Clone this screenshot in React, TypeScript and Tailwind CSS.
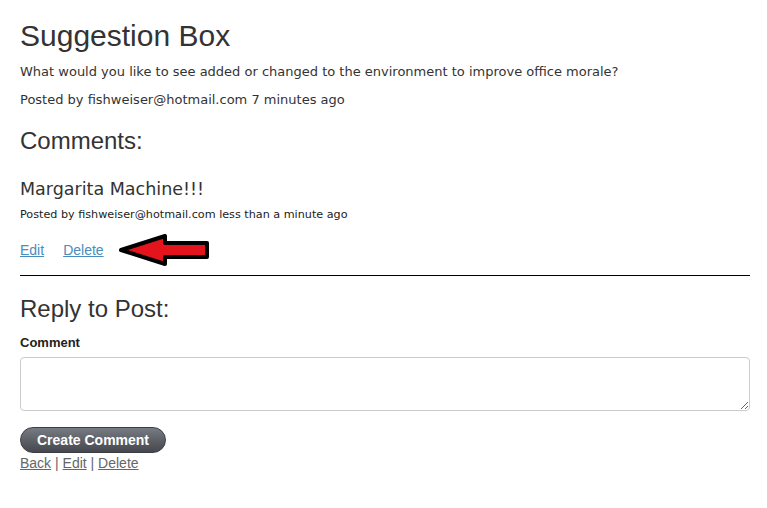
import React from "react";

const Arrow: React.FC = () => (
  <svg width="92" height="34" viewBox="0 0 92 34" className="ml-[15px]">
    <polygon
      points="2,17 46,3 46,10 88,10 88,24 46,24 46,31"
      fill="#e3141b"
      stroke="#000"
      strokeWidth="4"
      strokeLinejoin="round"
    />
  </svg>
);

const App: React.FC = () => {
  return (
    <div className="min-h-screen bg-white px-5 pt-[14px] text-[#333]">
      <h1 className="font-['Liberation_Sans',Arial,sans-serif] text-[30px] leading-[44px]">
        Suggestion Box
      </h1>
      <p className="mt-[6px] font-['DejaVu_Sans',Verdana,sans-serif] text-[13px] leading-[16px]">
        What would you like to see added or changed to the environment to improve office morale?
      </p>
      <p className="mt-[12px] font-['DejaVu_Sans',Verdana,sans-serif] text-[13px] leading-[16px]">
        Posted by fishweiser@hotmail.com 7 minutes ago
      </p>

      <h2 className="mt-[18px] font-['Liberation_Sans',Arial,sans-serif] text-[24px] leading-[30px]">
        Comments:
      </h2>
      <h3 className="mt-[23px] font-['DejaVu_Sans',Verdana,sans-serif] text-[17.5px] leading-[20px]">
        Margarita Machine!!!
      </h3>
      <p className="mt-[9px] font-['DejaVu_Sans',Verdana,sans-serif] text-[11.2px] leading-[14px] text-[#222]">
        Posted by fishweiser@hotmail.com less than a minute ago
      </p>
      <div className="mt-[11px] flex items-center font-['Liberation_Sans',Arial,sans-serif] text-[14px] text-[#4a8cbb]">
        <a href="#" className="underline">Edit</a>
        <a href="#" className="ml-[19px] underline">Delete</a>
        <Arrow />
      </div>

      <hr className="mt-[8px] w-[730px] border-t border-black" />

      <h2 className="mt-[18px] font-['Liberation_Sans',Arial,sans-serif] text-[24px] leading-[30px]">
        Reply to Post:
      </h2>
      <label className="mt-[11px] block font-['Liberation_Sans',Arial,sans-serif] text-[13px] font-bold leading-[16px] text-[#222]">
        Comment
      </label>
      <textarea className="mt-[6px] block h-[54px] w-[730px] rounded-[4px] border border-[#ccc] bg-white" />
      <button className="mt-[16px] block h-[26px] rounded-full border border-[#3a3d42] bg-gradient-to-b from-[#777b82] to-[#45484e] px-4 font-['Liberation_Sans',Arial,sans-serif] text-[14px] font-bold text-white">
        Create Comment
      </button>
      <div className="mt-px font-['Liberation_Sans',Arial,sans-serif] text-[14px] leading-[18px] text-[#666]">
        <a href="#" className="underline">Back</a> | <a href="#" className="underline">Edit</a> |{" "}
        <a href="#" className="underline">Delete</a>
      </div>
    </div>
  );
};

export default App;
